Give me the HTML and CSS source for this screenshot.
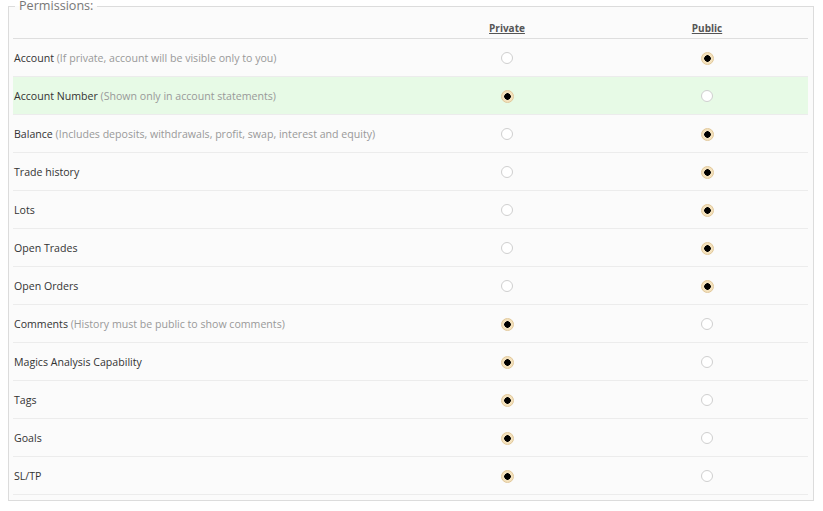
FILE: index.html
```html
<!DOCTYPE html>
<html>
<head>
<meta charset="utf-8">
<link rel="stylesheet" href="styles.css">
</head>
<body>
<fieldset class="perm">
  <legend class="perm-legend">Permissions:</legend>
  <div class="grid">
    <div class="head"></div>
    <div class="head col"><span>Private</span></div>
    <div class="head col"><span>Public</span></div>
  </div>
  <div class="rows">
    <div class="row"><div class="label">Account <span class="hint">(If private, account will be visible only to you)</span></div><div class="col"><i class="radio"></i></div><div class="col"><i class="radio on"></i></div></div>
    <div class="row hl"><div class="label">Account Number <span class="hint">(Shown only in account statements)</span></div><div class="col"><i class="radio on"></i></div><div class="col"><i class="radio"></i></div></div>
    <div class="row"><div class="label">Balance <span class="hint">(Includes deposits, withdrawals, profit, swap, interest and equity)</span></div><div class="col"><i class="radio"></i></div><div class="col"><i class="radio on"></i></div></div>
    <div class="row"><div class="label">Trade history</div><div class="col"><i class="radio"></i></div><div class="col"><i class="radio on"></i></div></div>
    <div class="row"><div class="label">Lots</div><div class="col"><i class="radio"></i></div><div class="col"><i class="radio on"></i></div></div>
    <div class="row"><div class="label">Open Trades</div><div class="col"><i class="radio"></i></div><div class="col"><i class="radio on"></i></div></div>
    <div class="row"><div class="label">Open Orders</div><div class="col"><i class="radio"></i></div><div class="col"><i class="radio on"></i></div></div>
    <div class="row"><div class="label">Comments <span class="hint">(History must be public to show comments)</span></div><div class="col"><i class="radio on"></i></div><div class="col"><i class="radio"></i></div></div>
    <div class="row"><div class="label">Magics Analysis Capability</div><div class="col"><i class="radio on"></i></div><div class="col"><i class="radio"></i></div></div>
    <div class="row"><div class="label">Tags</div><div class="col"><i class="radio on"></i></div><div class="col"><i class="radio"></i></div></div>
    <div class="row"><div class="label">Goals</div><div class="col"><i class="radio on"></i></div><div class="col"><i class="radio"></i></div></div>
    <div class="row"><div class="label">SL/TP</div><div class="col"><i class="radio on"></i></div><div class="col"><i class="radio"></i></div></div>
  </div>
</fieldset>
</body>
</html>
```
FILE: styles.css
```css
html, body {
  margin: 0;
  padding: 0;
  background: #ffffff;
}
body {
  padding: 0 8px 0 8px;
  font-family: "Open Sans", sans-serif;
  font-size: 11px;
  color: #333;
}
.perm {
  margin: 0;
  width: 806px;
  box-sizing: border-box;
  border: 1px solid #dcdcdc;
  background: #fbfbfb;
  padding: 0 5px 5px 4px;
  min-inline-size: 0;
}
.perm-legend {
  font-family: "Open Sans", sans-serif;
  font-size: 12.6px;
  color: #777;
  padding: 0 4px;
  margin-left: 2px;
  line-height: 12px;
}
.grid, .row {
  display: grid;
  grid-template-columns: 394px 200px 200px;
  align-items: center;
}
.grid {
  height: 26px;
  border-bottom: 1px solid #dedede;
  align-items: end;
}
.head.col {
  text-align: center;
  padding-bottom: 3px;
}
.head span {
  font-family: "Open Sans", sans-serif;
  font-size: 10px;
  font-weight: bold;
  color: #555;
  text-decoration: underline;
}
.row {
  height: 37px;
  border-bottom: 1px solid #ececec;
}
.row.hl {
  background: #e7fae6;
}
.label {
  padding-left: 1px;
  font-family: "Open Sans", sans-serif;
  font-size: 10.6px;
  color: #333;
  white-space: nowrap;
}
.hint {
  color: #999;
}
.col {
  display: flex;
  justify-content: center;
  align-items: center;
  padding-top: 1px;
}
.radio {
  display: block;
  width: 12px;
  height: 12px;
  box-sizing: border-box;
  border-radius: 50%;
  border: 1px solid #cfcfcf;
  background: #fff;
}
.radio.on {
  width: 13px;
  height: 13px;
  border: 1px solid #e2c89a;
  background: radial-gradient(circle, #000 0 3px, #f3e1bd 3.5px);
}
```
